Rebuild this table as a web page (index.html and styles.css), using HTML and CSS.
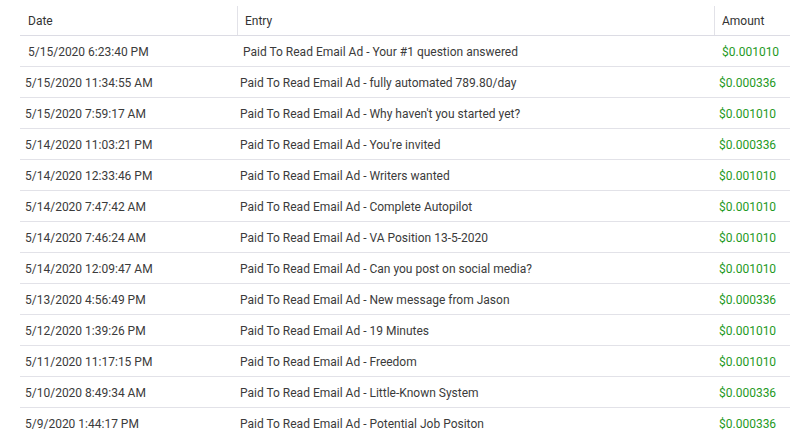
FILE: index.html
```html
<!DOCTYPE html>
<html><head><meta charset="utf-8"><link rel="stylesheet" href="styles.css"></head>
<body>
<table class="ledger">
  <colgroup><col class="c-date"><col class="c-entry"><col class="c-amt"></colgroup>
  <thead>
    <tr><th>Date</th><th class="sep">Entry</th><th class="sep">Amount</th></tr>
  </thead>
  <tbody>
    <tr class="first"><td>5/15/2020 6:23:40 PM</td><td class="entry">Paid To Read Email Ad - Your #1 question answered</td><td class="amt">$0.001010</td></tr>
    <tr><td>5/15/2020 11:34:55 AM</td><td class="entry">Paid To Read Email Ad - fully automated 789.80/day</td><td class="amt">$0.000336</td></tr>
    <tr><td>5/15/2020 7:59:17 AM</td><td class="entry">Paid To Read Email Ad - Why haven't you started yet?</td><td class="amt">$0.001010</td></tr>
    <tr><td>5/14/2020 11:03:21 PM</td><td class="entry">Paid To Read Email Ad - You're invited</td><td class="amt">$0.000336</td></tr>
    <tr><td>5/14/2020 12:33:46 PM</td><td class="entry">Paid To Read Email Ad - Writers wanted</td><td class="amt">$0.001010</td></tr>
    <tr><td>5/14/2020 7:47:42 AM</td><td class="entry">Paid To Read Email Ad - Complete Autopilot</td><td class="amt">$0.001010</td></tr>
    <tr><td>5/14/2020 7:46:24 AM</td><td class="entry">Paid To Read Email Ad - VA Position 13-5-2020</td><td class="amt">$0.001010</td></tr>
    <tr><td>5/14/2020 12:09:47 AM</td><td class="entry">Paid To Read Email Ad - Can you post on social media?</td><td class="amt">$0.001010</td></tr>
    <tr><td>5/13/2020 4:56:49 PM</td><td class="entry">Paid To Read Email Ad - New message from Jason</td><td class="amt">$0.000336</td></tr>
    <tr><td>5/12/2020 1:39:26 PM</td><td class="entry">Paid To Read Email Ad - 19 Minutes</td><td class="amt">$0.001010</td></tr>
    <tr><td>5/11/2020 11:17:15 PM</td><td class="entry">Paid To Read Email Ad - Freedom</td><td class="amt">$0.001010</td></tr>
    <tr><td>5/10/2020 8:49:34 AM</td><td class="entry">Paid To Read Email Ad - Little-Known System</td><td class="amt">$0.000336</td></tr>
    <tr class="last"><td>5/9/2020 1:44:17 PM</td><td class="entry">Paid To Read Email Ad - Potential Job Positon</td><td class="amt">$0.000336</td></tr>
  </tbody>
</table>
</body></html>
```
FILE: styles.css
```css
html,body{margin:0;padding:0;background:#fff;}
body{padding-left:20px;font-family:Roboto,"Liberation Sans",sans-serif;font-size:12px;color:#3b3b3b;}
.ledger{width:770px;border-collapse:collapse;table-layout:fixed;}
.c-date{width:217px}
.c-entry{width:477px}
.c-amt{width:76px}
.ledger th{font-weight:400;text-align:left;height:29px;padding:6px 0 0 8px;border-bottom:1px solid #dcdce4;position:relative;color:#333;}
.ledger th.sep::before{content:"";position:absolute;left:0;top:6px;bottom:0;border-left:1px solid #e2e2e8;}
.ledger td{height:29px;padding:1px 0 0 5px;border-bottom:1px solid #e2e2e8;white-space:nowrap;}
.ledger td.entry{padding-left:3px;}
.ledger td.amt{padding-left:5px;color:#1f9a1f;}
.ledger tr.first td{padding-left:8px;}
.ledger tr.first td.entry{padding-left:6px;}
.ledger tr.first td.amt{padding-left:8px;}
.ledger tr.last td{border-bottom:0;}
```
